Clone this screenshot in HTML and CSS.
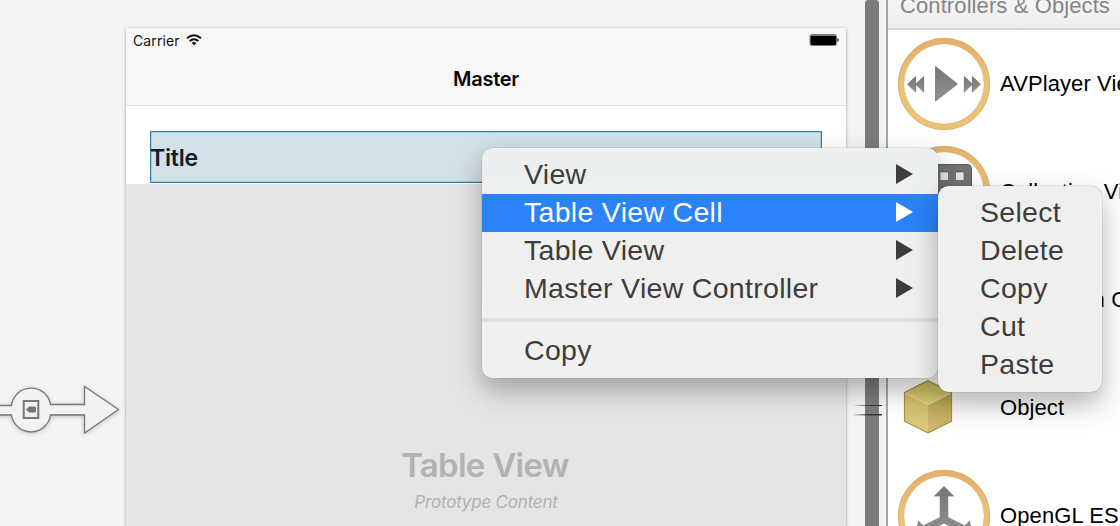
FILE: index.html
```
<!DOCTYPE html>
<html lang="en">
<head>
<meta charset="utf-8">
<title>Storyboard</title>
<link rel="stylesheet" href="styles.css">
</head>
<body>
<svg class="defs" width="0" height="0">
  <defs>
    <linearGradient id="metal" x1="0" y1="0" x2="0" y2="1"><stop offset="0" stop-color="#757575"/><stop offset="1" stop-color="#929292"/></linearGradient>
    <linearGradient id="ring" x1="0" y1="0" x2="0" y2="1"><stop offset="0" stop-color="#e4b26a"/><stop offset=".5" stop-color="#edc17a"/><stop offset="1" stop-color="#ecc278"/></linearGradient>
    <linearGradient id="cubetop" x1="0" y1="0" x2="0" y2="1"><stop offset="0" stop-color="#c3b65b"/><stop offset="1" stop-color="#dcd074"/></linearGradient>
    <linearGradient id="cubeleft" x1="0" y1="0" x2="0" y2="1"><stop offset="0" stop-color="#cdbb66"/><stop offset="1" stop-color="#dccb80"/></linearGradient>
    <linearGradient id="cuberight" x1="0" y1="0" x2="0" y2="1"><stop offset="0" stop-color="#b9a252"/><stop offset="1" stop-color="#d3bd73"/></linearGradient>
    <linearGradient id="fade"><stop offset="0" stop-color="#333" stop-opacity="0"/><stop offset=".65" stop-color="#333"/></linearGradient>
    <g id="circle"><circle cx="46" cy="46" r="43" fill="#fff" stroke="url(#ring)" stroke-width="6"/><circle cx="46" cy="46" r="45.6" fill="none" stroke="#d5a862" stroke-width=".7"/><circle cx="46" cy="46" r="40.3" fill="none" stroke="#d9b06c" stroke-width=".6"/></g>
  </defs>
</svg>
<div class="workspace">
  <main class="canvas">
    <div class="entry">
      <svg width="125" height="60" viewBox="0 0 125 60">
        <path class="entry-shape" d="M-3 25.500H11.500A19.700 19.700 0 0 1 50.500 24.500H84.500V6.500L118.500 29.500 84.500 53V35H50.500A19.700 19.700 0 0 1 11.500 35H-3Z"/>
        <path d="M-1 35H11.500M50.500 34.800H84" stroke="#8c8c8c" stroke-width="1.600"/>
        <rect x="23.700" y="21" width="14.600" height="17" fill="#f0f0f0" stroke="#777" stroke-width="2"/>
        <path d="M26 29.500L29 26.500H34.500Q36 26.500 36 28V31Q36 32.500 34.500 32.500H29Z" fill="#777"/>
      </svg>
    </div>
    <section class="device">
      <header class="navbar">
        <div class="status">
          <span class="carrier">Carrier</span>
          <svg width="16" height="12" viewBox="0 0 16 12"><path d="M1 4.300Q8-1.700 15 4.300M3.600 7Q8 3.300 12.400 7" fill="none" stroke="#111" stroke-width="1.900"/><path d="M5.600 9Q8 7 10.400 9L8 11.300Z" fill="#111"/></svg>
          <svg class="battery" width="30" height="12" viewBox="0 0 30 12"><rect x="1" y=".5" width="26.500" height="11" rx="1.800" fill="#fff" stroke="#777"/><rect x="1.500" y="1.500" width="25.500" height="9.500" rx="1" fill="#000"/><path d="M28.300 4Q29.800 4.500 29.800 6T28.300 8Z" fill="#222"/></svg>
        </div>
        <h1 class="nav-title">Master</h1>
      </header>
      <div class="cell"><div class="cell-title">Title</div></div>
      <div class="table-content"><div class="table-name">Table View</div><div class="table-hint">Prototype Content</div></div>
    </section>
    <div class="gutter">
      <div class="scroller"></div>
      <svg class="connector" width="30" height="12" viewBox="0 0 30 12"><path d="M0 1H30V2H0ZM0 10H30V11.500H0Z" fill="url(#fade)"/></svg>
    </div>
  </main>
  <aside class="library">
    <header class="library-head">Controllers &amp; Objects</header>
    <div class="item">
      <svg width="92" height="92" viewBox="0 0 92 92"><use href="#circle"/><g fill="url(#metal)" stroke="#686868" stroke-width=".7"><path d="M37.500 28.500V63L59.500 46Z"/><path d="M17.700 38.500V54L9.500 46.300ZM25.700 38.500V54L17.700 46.300Z"/><path d="M66.300 38.500V54L74.300 46.300ZM74.300 38.500V54L82.500 46.300Z"/></g></svg>
      <span>AVPlayer View Controller</span>
    </div>
    <div class="item">
      <svg width="92" height="92" viewBox="0 0 92 92"><use href="#circle"/><rect x="18.500" y="18.500" width="55" height="56" rx="4" fill="#737373" stroke="#5a5a5a"/><g fill="#e8e8e8" stroke="#5c5c5c" stroke-width=".7"><rect x="26" y="26" width="8.500" height="8.500" rx="1"/><rect x="42" y="26" width="8.500" height="8.500" rx="1"/><rect x="57.500" y="26" width="8.500" height="8.500" rx="1"/><rect x="26" y="42" width="8.500" height="8.500" rx="1"/><rect x="42" y="42" width="8.500" height="8.500" rx="1"/><rect x="57.500" y="42" width="8.500" height="8.500" rx="1"/></g></svg>
      <span>Collection View Controller</span>
    </div>
    <div class="item">
      <svg width="92" height="92" viewBox="0 0 92 92"><use href="#circle"/><path d="M54 24L32 46 54 68" fill="none" stroke="#7c7c7c" stroke-width="7"/></svg>
      <span>Navigation Controller</span>
    </div>
    <div class="item">
      <svg width="92" height="92" viewBox="0 0 92 92"><path d="M30 18L54 30 30 43 6 30Z" fill="url(#cubetop)"/><path d="M6 30L30 42V71.500L6 59.500Z" fill="url(#cubeleft)"/><path d="M54 30L30 42V71.500L54 59.500Z" fill="url(#cuberight)"/><path d="M6.500 30.500L30 42.500 53.500 30.500" fill="none" stroke="#e5da88" stroke-width="1.300"/><path d="M30 18.700L53.500 30.500V59.200L30 70.800 6.500 59.200V30.500Z" fill="none" stroke="#a89243" stroke-width="1.200"/></svg>
      <span>Object</span>
    </div>
    <div class="item">
      <svg width="92" height="92" viewBox="0 0 92 92"><use href="#circle"/><path d="M46 16.500L55.500 26H49.800V47.500L67 56 71.500 51 74 65 60 67 64 62 46 53 28 62 32 67 18 65 20.500 51 25 56 42.200 47.500V26H36.500Z" fill="url(#metal)" stroke="#6a6a6a" stroke-width=".7"/></svg>
      <span>OpenGL ES</span>
    </div>
  </aside>
</div>
<nav class="menu context">
  <div class="entry-row">View<i class="arrow"></i></div>
  <div class="entry-row active">Table View Cell<i class="arrow"></i></div>
  <div class="entry-row">Table View<i class="arrow"></i></div>
  <div class="entry-row">Master View Controller<i class="arrow"></i></div>
  <div class="separator"></div>
  <div class="entry-row">Copy</div>
</nav>
<nav class="menu submenu">
  <div class="entry-row">Select</div>
  <div class="entry-row">Delete</div>
  <div class="entry-row">Copy</div>
  <div class="entry-row">Cut</div>
  <div class="entry-row">Paste</div>
</nav>
</body>
</html>
```
FILE: styles.css
```
* { box-sizing: border-box; }
body { margin: 0; width: 1120px; height: 526px; overflow: hidden; position: relative; background: #f4f4f4; font-family: "Liberation Sans", Arial, sans-serif; }
svg { display: block; flex: none; }
.defs { position: absolute; }
.workspace { display: flex; height: 526px; }
.canvas { display: flex; width: 886px; flex: none; background: #f4f4f4; }
.entry { width: 126px; padding-top: 380px; }
.entry svg { overflow: visible; }
.entry-shape { fill: #f2f2f2; stroke: #777; stroke-width: 1.3; filter: drop-shadow(0 1px 2px rgba(0,0,0,.2)); }
.device { width: 720px; margin-top: 28px; flex: none; display: flex; flex-direction: column; background: #fff; box-shadow: 0 1px 3px rgba(0,0,0,.38); font-family: Inter, sans-serif; }
.navbar { height: 78px; background: #f7f7f7; border-bottom: 1px solid #dedede; }
.status { height: 24px; display: flex; align-items: center; gap: 6px; padding: 0 7px 0 7px; font-size: 14px; color: #111; }
.carrier { letter-spacing: .1px; }
.battery { margin-left: auto; }
.nav-title { margin: 13px 0 0; text-align: center; font-size: 20px; line-height: 28px; font-weight: 600; letter-spacing: -.25px; color: #080808; }
.cell { height: 78px; padding: 25px 24px 1px; flex: none; }
.cell-title { height: 52px; border: 1px solid #377da6; background: #d2e0e7; box-shadow: inset 0 0 0 1px #aac8d7; line-height: 53px; font-size: 23px; font-weight: 600; letter-spacing: -.2px; text-indent: -1px; color: #101d26; }
.table-content { flex: 1; background: #e5e5e5; padding: 259px 2px 0 0; text-align: center; color: #b2b2b2; }
.table-name { font-size: 33px; line-height: 44px; font-weight: 600; letter-spacing: -.7px; }
.table-hint { margin: 2px -2px 0 0; font-size: 17px; line-height: 26px; font-style: italic; letter-spacing: -.2px; }
.gutter { position: relative; width: 40px; padding-left: 19px; }
.scroller { width: 14px; height: 540px; border-radius: 3px; background: #7b7b7b; }
.connector { position: absolute; left: 6px; top: 404px; }
.library { width: 234px; overflow: hidden; border-left: 2px solid #a0a6ac; background: #fff; flex: none; }
.library-head { height: 30px; padding-left: 12px; background: linear-gradient(#f5f5f5, #eee); border-bottom: 2px solid #d6d6d6; color: #858585; font-size: 22px; line-height: 12px; letter-spacing: .1px; white-space: nowrap; }
.item { display: flex; align-items: center; gap: 10px; height: 108px; padding-left: 10px; font-size: 22px; letter-spacing: .1px; white-space: nowrap; color: #000; }
.menu { position: absolute; padding: 8px 0; background: #efefef; border-radius: 11px; color: #3d3d3d; font-size: 28.5px; line-height: 36px; letter-spacing: .3px; box-shadow: 0 0 1px rgba(0,0,0,.5), 0 12px 28px rgba(0,0,0,.3); }
.context { left: 482px; top: 148px; width: 456px; height: 230px; background: linear-gradient(#ecf0f1, #efefef 84px, #f0f0f0); }
.submenu { left: 938px; top: 186px; width: 164px; height: 206px; background: #efefef; }
.entry-row { height: 38px; padding: 0 25px 2px 42px; display: flex; align-items: center; justify-content: space-between; white-space: nowrap; }
.active { background: #2a83f8; color: #fff; }
.arrow { width: 17px; height: 20px; background: currentColor; clip-path: polygon(0 0, 100% 50%, 0 100%); }
.separator { height: 4px; margin: 10px 0; background: #dedede; }
```
